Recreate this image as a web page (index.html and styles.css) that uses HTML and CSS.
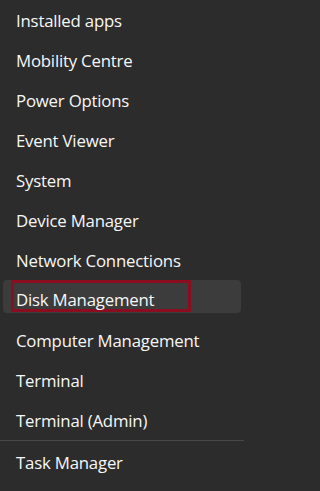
FILE: index.html
```html
<!DOCTYPE html>
<html lang="en">
<head>
<meta charset="utf-8">
<link rel="stylesheet" href="styles.css">
</head>
<body>
<ul class="menu">
  <li class="item"><span class="label">Installed apps</span></li>
  <li class="item"><span class="label">Mobility Centre</span></li>
  <li class="item"><span class="label">Power Options</span></li>
  <li class="item"><span class="label">Event Viewer</span></li>
  <li class="item"><span class="label">System</span></li>
  <li class="item"><span class="label">Device Manager</span></li>
  <li class="item"><span class="label">Network Connections</span></li>
  <li class="item item-active"><span class="label label-marked">Disk Management</span></li>
  <li class="item"><span class="label">Computer Management</span></li>
  <li class="item"><span class="label">Terminal</span></li>
  <li class="item"><span class="label">Terminal (Admin)</span></li>
  <li class="separator"></li>
  <li class="item"><span class="label">Task Manager</span></li>
</ul>
</body>
</html>
```

FILE: styles.css
```css
html, body {
  margin: 0;
  padding: 0;
  background: #2c2c2c;
}
body {
  width: 244px;
  height: 491px;
  overflow: hidden;
  font-family: "Open Sans", "Noto Sans", sans-serif;
  color: #f7f7f7;
}
.menu {
  list-style: none;
  margin: 0;
  padding: 0;
  display: flex;
  flex-direction: column;
}
.item {
  height: 40px;
  display: flex;
  align-items: center;
  padding-left: 16px;
  font-size: 16.8px;
  letter-spacing: -0.2px;
}
.item-active {
  position: relative;
  padding-left: 11px;
  align-items: flex-start;
}
.item-active::before {
  content: "";
  position: absolute;
  left: 3px;
  right: 3px;
  top: 0;
  height: 33px;
  border-radius: 4px;
  background: #3c3c3c;
}
.label-marked {
  position: relative;
  display: flex;
  align-items: center;
  box-sizing: border-box;
  width: 180px;
  height: 32px;
  padding-left: 2px;
  padding-top: 6px;
  border: 3px solid #8a0d20;
}
.separator {
  height: 1px;
  background: #484848;
  margin-bottom: 1px;
}
```
